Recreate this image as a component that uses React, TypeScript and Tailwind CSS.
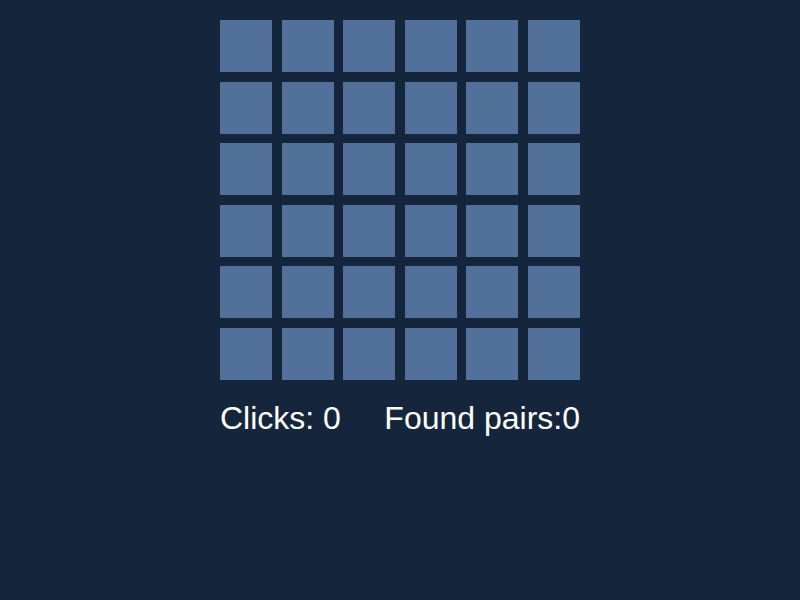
export default function App() {
  const cards = Array.from({ length: 36 }, (_, i) => i);

  return (
    <div className="min-h-screen w-full bg-[#15263c] flex justify-center pt-5 font-['Liberation_Sans',Arial,sans-serif]">
      <div className="w-[360px]">
        <div className="grid grid-cols-6 gap-[9.6px]">
          {cards.map((i) => (
            <div key={i} className="h-[52px] bg-[#52719a]" />
          ))}
        </div>
        <div className="mt-[14px] flex justify-between text-[32px] text-white">
          <span>Clicks: 0</span>
          <span>Found pairs:0</span>
        </div>
      </div>
    </div>
  );
}
